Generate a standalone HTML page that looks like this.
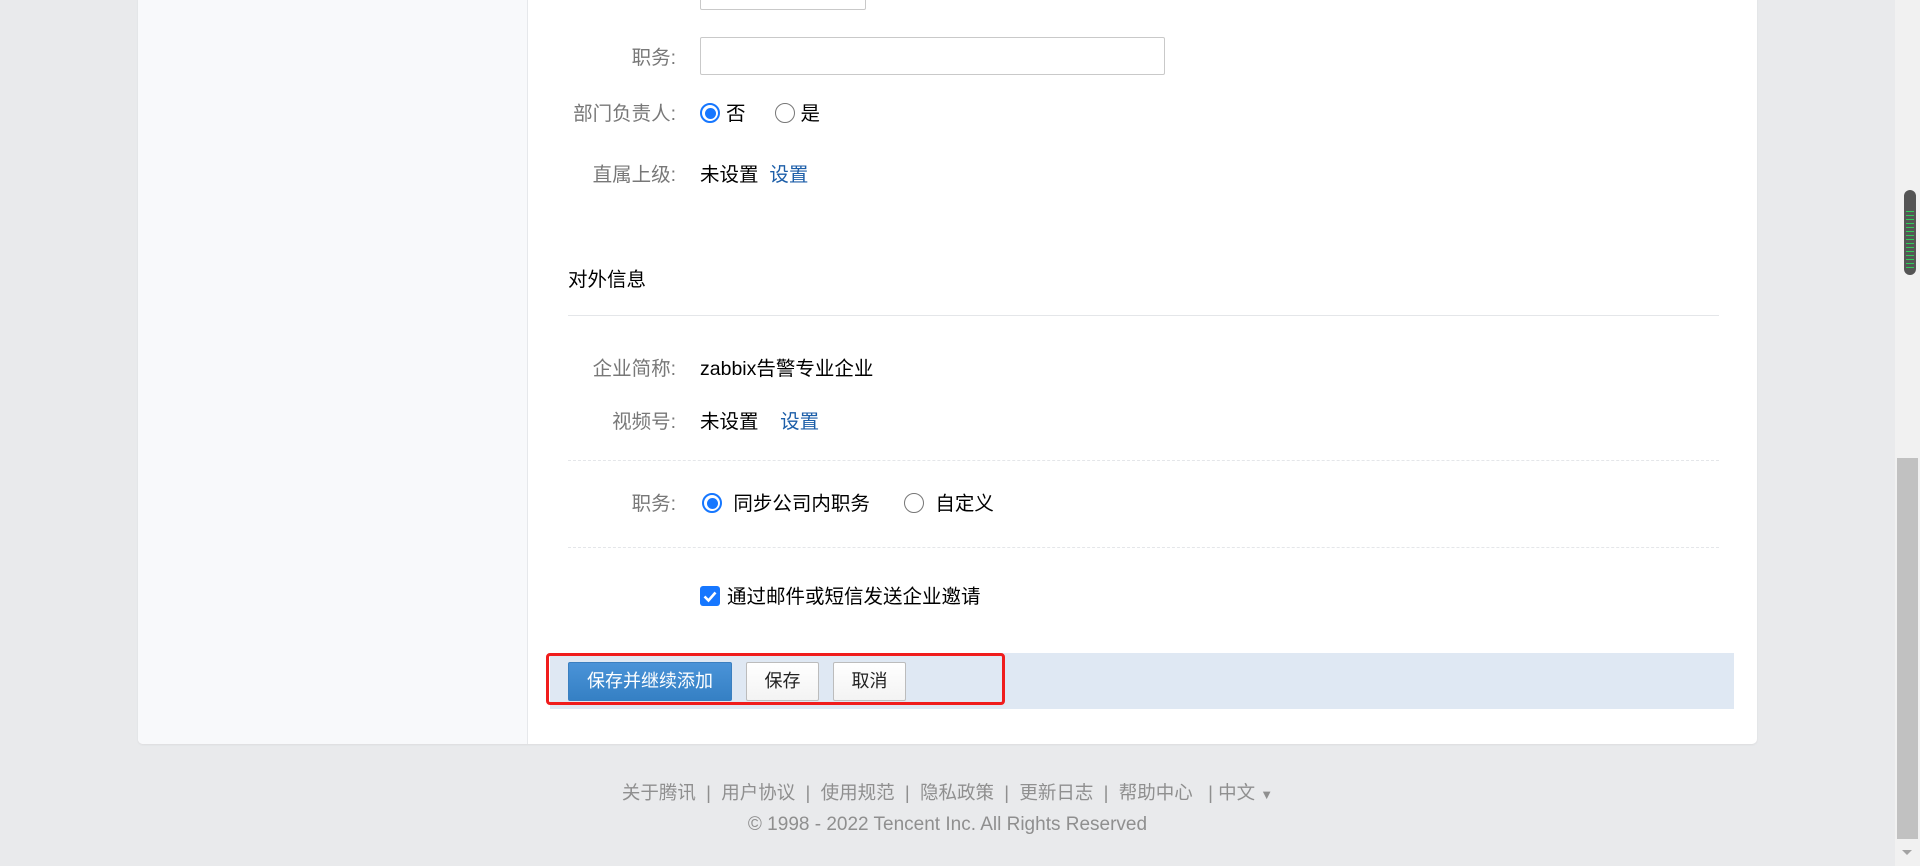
<!DOCTYPE html>
<html><head><meta charset="utf-8"><style>
*{box-sizing:border-box;margin:0;padding:0}
body{width:1920px;height:866px;background:#e9eaec;font-family:"Liberation Sans","Noto Sans CJK SC",sans-serif;font-size:19.5px;color:#000;position:relative;overflow:hidden}
.card{position:absolute;left:138px;top:-6px;width:1619px;height:750px;background:#fff;border-radius:5px;overflow:hidden;box-shadow:0 1px 2px rgba(0,0,0,.06)}
.side{position:absolute;left:0;top:0;width:390px;height:100%;background:#f8f9fb;border-right:1px solid #e6e8eb}
.a{position:absolute;line-height:24px}
.lbl{position:absolute;right:1081px;color:#787878;text-align:right;white-space:nowrap;line-height:24px}
.inp{position:absolute;border:1px solid #c9c9c9;border-radius:2px;background:#fff}
.radio{display:inline-block;width:20px;height:20px;border-radius:50%;border:1.5px solid #777;vertical-align:-3px;margin-right:6px;position:relative}
.radio.on{border:2px solid #1677ff}
.radio.on:after{content:"";position:absolute;left:2.5px;top:2.5px;width:11px;height:11px;border-radius:50%;background:#1677ff}
.link{color:#1c5ea8}
.hr{position:absolute;left:430px;width:1151px;border-top:1px solid #e4e6e9}
.dash{position:absolute;left:430px;width:1151px;border-top:1px dashed #e4e6e9}
.btn{position:absolute;top:9px;height:39px;border:1px solid #bcbcbc;border-radius:2px;background:linear-gradient(#fff,#f3f3f3);font-size:18px;text-align:center;line-height:37px;color:#222}
.footer{position:absolute;left:0;width:1895px;text-align:center;color:#8f8f8f;font-size:19px}
</style></head><body>
<div class="card">
 <div class="side"></div>
 <div class="inp" style="left:562px;top:0;width:166px;height:16px"></div>
 <div class="lbl" style="top:52px">职务:</div>
 <div class="inp" style="left:562px;top:43px;width:465px;height:38px"></div>
 <div class="lbl" style="top:108px">部门负责人:</div>
 <div class="a" style="left:562px;top:108px"><span class="radio on"></span>否<span style="display:inline-block;width:29px"></span><span class="radio"></span>是</div>
 <div class="lbl" style="top:169px">直属上级:</div>
 <div class="a" style="left:562px;top:169px">未设置&nbsp;&nbsp;<span class="link">设置</span></div>
 <div class="a" style="left:430px;top:274px">对外信息</div>
 <div class="hr" style="top:321px"></div>
 <div class="lbl" style="top:363px">企业简称:</div>
 <div class="a" style="left:562px;top:363px">zabbix告警专业企业</div>
 <div class="lbl" style="top:416px">视频号:</div>
 <div class="a" style="left:562px;top:416px">未设置&nbsp;&nbsp;&nbsp;&nbsp;<span class="link">设置</span></div>
 <div class="dash" style="top:466px"></div>
 <div class="lbl" style="top:498px">职务:</div>
 <div class="a" style="left:564px;top:498px"><span class="radio on"></span>&nbsp;同步公司内职务<span style="display:inline-block;width:34px"></span><span class="radio"></span>&nbsp;自定义</div>
 <div class="dash" style="top:553px"></div>
 <div class="a" style="left:562px;top:591px"><span style="display:inline-block;width:20px;height:20px;background:#1677ff;border-radius:3px;vertical-align:-3px;margin-right:7px;position:relative"><svg width="20" height="20" style="position:absolute;left:0;top:0"><path d="M4.5 10.5l4 4 7-8" stroke="#fff" stroke-width="2.6" fill="none"/></svg></span>通过邮件或短信发送企业邀请</div>
 <div class="a" style="left:412px;top:659px;width:1184px;height:56px;background:#dfe8f3">
  <div class="btn" style="left:18px;width:164px;background:linear-gradient(#4a93d8,#3580c4);border-color:#3a7fc0;color:#fff">保存并继续添加</div>
  <div class="btn" style="left:196px;width:73px">保存</div>
  <div class="btn" style="left:283px;width:73px">取消</div>
 </div>
 <div class="a" style="left:408px;top:659px;width:459px;height:52px;border:3px solid #f01c1c;border-radius:4px"></div>
</div>
<div class="footer" style="top:779px;font-size:18.5px">关于腾讯&nbsp;&nbsp;|&nbsp;&nbsp;用户协议&nbsp;&nbsp;|&nbsp;&nbsp;使用规范&nbsp;&nbsp;|&nbsp;&nbsp;隐私政策&nbsp;&nbsp;|&nbsp;&nbsp;更新日志&nbsp;&nbsp;|&nbsp;&nbsp;帮助中心&nbsp;&nbsp;&nbsp;|&nbsp;中文 <span style="font-size:13px">▼</span></div>
<div class="footer" style="top:814px">© 1998 - 2022 Tencent Inc. All Rights Reserved</div>
<div class="a" style="left:1895px;top:0;width:25px;height:866px;background:#f1f1f1"></div>
<div class="a" style="left:1897px;top:458px;width:21px;height:381px;background:#c1c1c1"></div>
<div class="a" style="left:1904px;top:190px;width:12px;height:85px;background:#555;border-radius:6px;background-image:repeating-linear-gradient(#555 0 3px,#2ecc58 3px 4px);background-size:8px 60px;background-repeat:no-repeat;background-position:2px 18px"></div>
<div class="a" style="left:1902px;top:850px;width:0;height:0;border-left:5px solid transparent;border-right:5px solid transparent;border-top:5px solid #a3a3a3"></div>
</body></html>
